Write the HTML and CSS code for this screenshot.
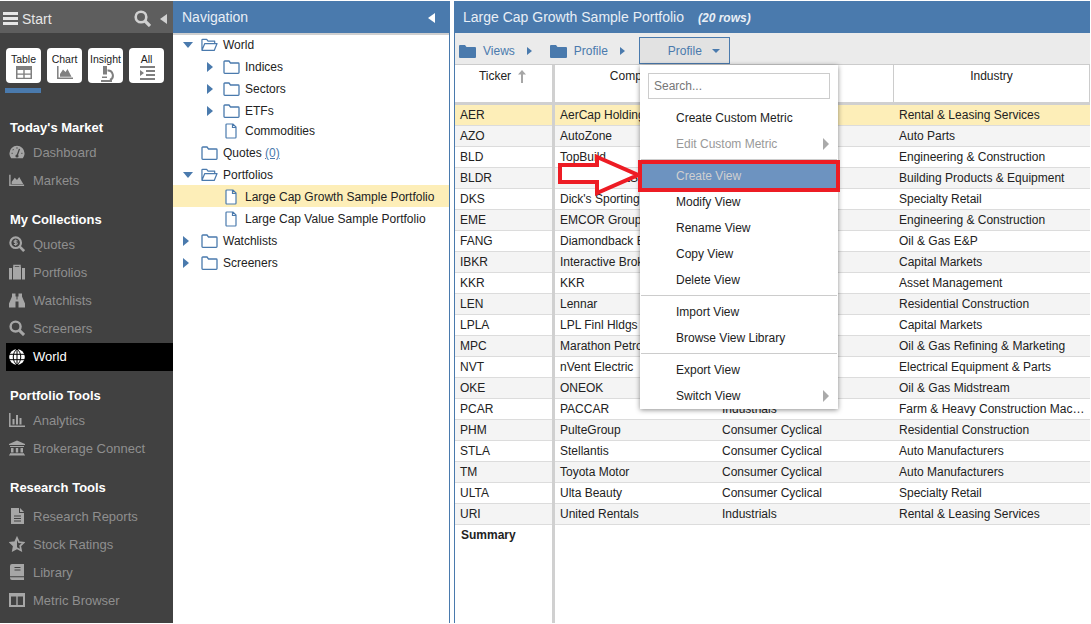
FILE: index.html
```html
<!DOCTYPE html>
<html lang="en">
<head>
    <meta charset="UTF-8" />
    <meta name="viewport" content="width=device-width, initial-scale=1" />
    <title>Large Cap Growth Sample Portfolio</title>
    <link rel="stylesheet" href="styles.css">
</head>
<body>

<svg class="defs" width="0" height="0">
    <symbol id="i-folder" viewBox="0 0 17 14"><path d="M1 2.500V12.500a.8.8 0 0 0 .8.8H15.200a.8.8 0 0 0 .8-.8V3.800a.8.8 0 0 0-.8-.8H7.500L6 1H1.800A.8.8 0 0 0 1 1.800Z" fill="#fff" stroke="#4a7aad" stroke-width="1.300"/></symbol>
    <symbol id="i-open" viewBox="0 0 18 14"><path d="M1 12.500V1.800A.8.8 0 0 1 1.800 1H6L7.500 3H14.500V5.500M1 12.500 4 5.500H17L14 12.800H1.500Z" fill="#fff" stroke="#4a7aad" stroke-width="1.300" stroke-linejoin="round"/></symbol>
    <symbol id="i-doc" viewBox="0 0 12 16"><path d="M1 1.800A.8.8 0 0 1 1.800 1H8L11 4V14.200A.8.8 0 0 1 10.200 15H1.800A.8.8 0 0 1 1 14.200ZM7.500 1V4.500H11" fill="#fff" stroke="#4a7aad" stroke-width="1.200"/></symbol>
    <symbol id="i-solid" viewBox="0 0 17 14"><path d="M0 2A1 1 0 0 1 1 1H6L7.500 3H16A1 1 0 0 1 17 4V13A1 1 0 0 1 16 14H1A1 1 0 0 1 0 13Z" fill="#4a7aad"/></symbol>
    <symbol id="i-dash" viewBox="0 0 18 16"><path d="M9 1A8.500 8.500 0 0 0 .5 9.500C.5 11.500 1.200 13.500 2.500 15H15.500C16.800 13.500 17.500 11.500 17.500 9.500A8.500 8.500 0 0 0 9 1Z" fill="#a6a6a6"/><path d="M9 12.500 11.800 4.500M4 9.500H3M5 5.800 4.300 5.100M9 4V3M14 9.500H15" stroke="#414141" stroke-width="1.500"/><circle cx="9" cy="12.500" r="1.800" fill="#414141"/></symbol>
    <symbol id="i-area" viewBox="0 0 18 14"><path d="M1 1V13H17" fill="none" stroke="#a6a6a6" stroke-width="1.600"/><path d="M3 11.500V9L6.500 4.500 9 7 11.500 3.500 16 11.500Z" fill="#a6a6a6"/></symbol>
    <symbol id="i-quote" viewBox="0 0 18 18"><circle cx="7.500" cy="7.500" r="6" fill="none" stroke="#a6a6a6" stroke-width="2.400"/><path d="M12 12 17 17" stroke="#a6a6a6" stroke-width="3"/><path d="M9.500 5.500H6.700A1 1 0 0 0 6.700 7.500H8.300A1 1 0 0 1 8.300 9.500H5.500M7.500 4V11" fill="none" stroke="#a6a6a6" stroke-width="1.200"/></symbol>
    <symbol id="i-case" viewBox="0 0 16 15"><path d="M5 3V1H11V3" fill="none" stroke="#a6a6a6" stroke-width="1.500"/><path d="M0 3.500H3V15H0ZM4 2.500H12V15H4ZM13 3.500H16V15H13Z" fill="#a6a6a6"/></symbol>
    <symbol id="i-binoc" viewBox="0 0 16 15"><path d="M3 1H6.500V4H7.500V7H8.500V4H9.500V1H13V4L16 11V15H9.500V9H6.500V15H0V11L3 4Z" fill="#a6a6a6"/></symbol>
    <symbol id="i-search" viewBox="0 0 17 17"><circle cx="7" cy="7" r="5.300" fill="none" stroke="currentColor" stroke-width="2.600"/><path d="M11 11 16 16" stroke="currentColor" stroke-width="3.200"/></symbol>
    <symbol id="i-globe" viewBox="0 0 16 16"><circle cx="8" cy="8" r="7.800" fill="#fff"/><path d="M0 5.300H16M0 10.700H16M8 0V16M8 0C3 4 3 12 8 16M8 0C13 4 13 12 8 16" fill="none" stroke="#000" stroke-width="1"/></symbol>
    <symbol id="i-bars" viewBox="0 0 16 14"><path d="M.8 0V13.200H16" fill="none" stroke="#a6a6a6" stroke-width="1.500"/><path d="M3.500 6H5.500V11.500H3.500ZM7 2H9V11.500H7ZM10.500 5H12.500V11.500H10.500Z" fill="#a6a6a6"/></symbol>
    <symbol id="i-bank" viewBox="0 0 16 15"><path d="M8 0 16 3.500V4.500H0V3.500ZM1 5.500H15V6.500H1ZM2 7.500H4.500V12H2ZM6.800 7.500H9.200V12H6.800ZM11.500 7.500H14V12H11.500ZM1 12.800H15V14H1ZM0 14H16V15H0Z" fill="#a6a6a6"/></symbol>
    <symbol id="i-report" viewBox="0 0 14 16"><path d="M1 0H9V5H14V16H1ZM10 0 14 4H10Z" fill="#a6a6a6"/><path d="M4 8H11M4 10.500H11M4 13H11" stroke="#414141" stroke-width="1"/></symbol>
    <symbol id="i-star" viewBox="0 0 17 16"><path d="M8.500 1.500 10.600 6 15.500 6.600 11.900 10 12.800 14.800 8.500 12.400 4.200 14.800 5.100 10 1.500 6.600 6.400 6Z" fill="none" stroke="#a6a6a6" stroke-width="1.800"/><path d="M8.500 2V12.400L4.200 14.800 5.100 10 1.500 6.600 6.400 6Z" fill="#a6a6a6"/></symbol>
    <symbol id="i-book" viewBox="0 0 15 16"><path d="M2.500 0H14.500V16H2.500A2 2 0 0 1 .5 14V2A2 2 0 0 1 2.500 0Z" fill="#a6a6a6"/><path d="M5 3.500H11M5 6H11M.5 12.800H14.500" stroke="#414141" stroke-width="1.100" fill="none"/></symbol>
    <symbol id="i-columns" viewBox="0 0 16 14"><path d="M0 0H16V14H0ZM2 3.500V12H7.300V3.500ZM8.700 3.500V12H14V3.500Z" fill="#a6a6a6" fill-rule="evenodd"/></symbol>
    <symbol id="i-table" viewBox="0 0 16 13"><path d="M0 0H16V13H0ZM1.500 4V7.500H7.300V4ZM8.700 4V7.500H14.500V4ZM1.500 8.800V11.700H7.300V8.800ZM8.700 8.800V11.700H14.500V8.800Z" fill="#7f7f7f" fill-rule="evenodd"/></symbol>
    <symbol id="i-chart" viewBox="0 0 16 13"><path d="M.8 0V12.200H16" fill="none" stroke="#7f7f7f" stroke-width="1.500"/><path d="M3 10.800V8L6 3.500 8.500 6 10.500 3 14.500 10.800Z" fill="#7f7f7f"/></symbol>
    <symbol id="i-micro" viewBox="0 0 16 16"><path d="M5 0H9V8.500H5ZM3 14H14V16H3Z" fill="#7f7f7f"/><path d="M9.500 4.500A5 5 0 0 1 12 14" fill="none" stroke="#7f7f7f" stroke-width="2"/><path d="M4 10.500H9V12H4Z" fill="#7f7f7f"/></symbol>
    <symbol id="i-list" viewBox="0 0 16 14"><path d="M1 0H16V2H1ZM7 4H16V6H7ZM7 8H16V10H7ZM1 12H16V14H1ZM1 4 5 7 1 10Z" fill="#7f7f7f"/></symbol>
</svg>

<div class="app">

    <aside class="sidebar">
        <div class="side-top">
            <span class="burger"><i></i><i></i><i></i></span>
            <span class="side-title">Start</span>
            <svg class="side-search"><use href="#i-search"/></svg>
            <span class="tri-left side-collapse"></span>
        </div>
        <div class="modes">
            <div class="mode"><span>Table</span><svg width="16" height="13"><use href="#i-table"/></svg></div>
            <div class="mode"><span>Chart</span><svg width="16" height="13"><use href="#i-chart"/></svg></div>
            <div class="mode"><span>Insight</span><svg width="16" height="16"><use href="#i-micro"/></svg></div>
            <div class="mode"><span>All</span><svg width="16" height="14"><use href="#i-list"/></svg></div>
        </div>
        <div class="mode-bar"></div>

        <h4 class="side-head first">Today's Market</h4>
        <a class="side-item"><svg><use href="#i-dash"/></svg>Dashboard</a>
        <a class="side-item"><svg><use href="#i-area"/></svg>Markets</a>

        <h4 class="side-head">My Collections</h4>
        <a class="side-item"><svg><use href="#i-quote"/></svg>Quotes</a>
        <a class="side-item"><svg><use href="#i-case"/></svg>Portfolios</a>
        <a class="side-item"><svg><use href="#i-binoc"/></svg>Watchlists</a>
        <a class="side-item"><svg><use href="#i-search"/></svg>Screeners</a>
        <a class="side-item active"><svg><use href="#i-globe"/></svg>World</a>

        <h4 class="side-head">Portfolio Tools</h4>
        <a class="side-item"><svg><use href="#i-bars"/></svg>Analytics</a>
        <a class="side-item"><svg><use href="#i-bank"/></svg>Brokerage Connect</a>

        <h4 class="side-head last">Research Tools</h4>
        <a class="side-item"><svg><use href="#i-report"/></svg>Research Reports</a>
        <a class="side-item"><svg><use href="#i-star"/></svg>Stock Ratings</a>
        <a class="side-item"><svg><use href="#i-book"/></svg>Library</a>
        <a class="side-item"><svg><use href="#i-columns"/></svg>Metric Browser</a>
    </aside>

    <nav class="navpanel">
        <div class="panel-head">Navigation<span class="tri-left nav-collapse"></span></div>
        <div class="tree">
            <div class="node"><span class="tri-down"></span><svg class="ic-folder"><use href="#i-open"/></svg>World</div>
            <div class="node sub"><span class="tri-right"></span><svg class="ic-folder"><use href="#i-folder"/></svg>Indices</div>
            <div class="node sub"><span class="tri-right"></span><svg class="ic-folder"><use href="#i-folder"/></svg>Sectors</div>
            <div class="node sub"><span class="tri-right"></span><svg class="ic-folder"><use href="#i-folder"/></svg>ETFs</div>
            <div class="node sub short"><span class="no-tri"></span><svg class="ic-doc"><use href="#i-doc"/></svg>Commodities</div>
            <div class="node"><span class="no-tri"></span><svg class="ic-folder"><use href="#i-folder"/></svg>Quotes&nbsp;<a class="count">(0)</a></div>
            <div class="node"><span class="tri-down"></span><svg class="ic-folder"><use href="#i-open"/></svg>Portfolios</div>
            <div class="node sub selected"><span class="no-tri"></span><svg class="ic-doc"><use href="#i-doc"/></svg>Large Cap Growth Sample Portfolio</div>
            <div class="node sub"><span class="no-tri"></span><svg class="ic-doc"><use href="#i-doc"/></svg>Large Cap Value Sample Portfolio</div>
            <div class="node"><span class="tri-right"></span><svg class="ic-folder"><use href="#i-folder"/></svg>Watchlists</div>
            <div class="node"><span class="tri-right"></span><svg class="ic-folder"><use href="#i-folder"/></svg>Screeners</div>
        </div>
    </nav>

    <main class="content">
        <div class="panel-head">Large Cap Growth Sample Portfolio<em>(20 rows)</em></div>
        <div class="toolbar">
            <svg class="crumb-folder"><use href="#i-solid"/></svg><span class="crumb">Views</span><span class="tri-right small"></span>
            <svg class="crumb-folder"><use href="#i-solid"/></svg><span class="crumb">Profile</span><span class="tri-right small"></span>
            <div class="view-btn">Profile<span class="tri-down small"></span></div>
        </div>

        <div class="grid-area">
            <div class="frozen">
                <div class="th">Ticker<svg class="sort" width="8" height="13" viewBox="0 0 8 13"><path d="M4 0 8 4.500H5V13H3V4.500H0Z" fill="#a6a6a6"/></svg></div>
                <div class="sep"></div>
                <div class="row hl">AER</div>
                <div class="row">AZO</div>
                <div class="row">BLD</div>
                <div class="row">BLDR</div>
                <div class="row">DKS</div>
                <div class="row">EME</div>
                <div class="row">FANG</div>
                <div class="row">IBKR</div>
                <div class="row">KKR</div>
                <div class="row">LEN</div>
                <div class="row">LPLA</div>
                <div class="row">MPC</div>
                <div class="row">NVT</div>
                <div class="row">OKE</div>
                <div class="row">PCAR</div>
                <div class="row">PHM</div>
                <div class="row">STLA</div>
                <div class="row">TM</div>
                <div class="row">ULTA</div>
                <div class="row">URI</div>
                <div class="summary">Summary</div>
            </div>
            <div class="scroll">
                <div class="th-row"><div class="th">Company</div><div class="th">Sector</div><div class="th">Industry</div></div>
                <div class="sep"></div>
                <div class="row hl"><span>AerCap Holdings</span><span>Industrials</span><span>Rental &amp; Leasing Services</span></div>
                <div class="row"><span>AutoZone</span><span>Consumer Cyclical</span><span>Auto Parts</span></div>
                <div class="row"><span>TopBuild</span><span>Consumer Cyclical</span><span>Engineering &amp; Construction</span></div>
                <div class="row"><span>Builders FirstSource</span><span>Industrials</span><span>Building Products &amp; Equipment</span></div>
                <div class="row"><span>Dick's Sporting Goods</span><span>Consumer Cyclical</span><span>Specialty Retail</span></div>
                <div class="row"><span>EMCOR Group</span><span>Industrials</span><span>Engineering &amp; Construction</span></div>
                <div class="row"><span>Diamondback Energy</span><span>Energy</span><span>Oil &amp; Gas E&amp;P</span></div>
                <div class="row"><span>Interactive Brokers</span><span>Financial Services</span><span>Capital Markets</span></div>
                <div class="row"><span>KKR</span><span>Financial Services</span><span>Asset Management</span></div>
                <div class="row"><span>Lennar</span><span>Consumer Cyclical</span><span>Residential Construction</span></div>
                <div class="row"><span>LPL Finl Hldgs</span><span>Financial Services</span><span>Capital Markets</span></div>
                <div class="row"><span>Marathon Petroleum</span><span>Energy</span><span>Oil &amp; Gas Refining &amp; Marketing</span></div>
                <div class="row"><span>nVent Electric</span><span>Industrials</span><span>Electrical Equipment &amp; Parts</span></div>
                <div class="row"><span>ONEOK</span><span>Energy</span><span>Oil &amp; Gas Midstream</span></div>
                <div class="row"><span>PACCAR</span><span>Industrials</span><span>Farm &amp; Heavy Construction Machinery</span></div>
                <div class="row"><span>PulteGroup</span><span>Consumer Cyclical</span><span>Residential Construction</span></div>
                <div class="row"><span>Stellantis</span><span>Consumer Cyclical</span><span>Auto Manufacturers</span></div>
                <div class="row"><span>Toyota Motor</span><span>Consumer Cyclical</span><span>Auto Manufacturers</span></div>
                <div class="row"><span>Ulta Beauty</span><span>Consumer Cyclical</span><span>Specialty Retail</span></div>
                <div class="row"><span>United Rentals</span><span>Industrials</span><span>Rental &amp; Leasing Services</span></div>
            </div>
        </div>

        <div class="menu">
            <div class="menu-search">Search...</div>
            <div class="menu-item">Create Custom Metric</div>
            <div class="menu-item disabled">Edit Custom Metric<span class="tri-right grey"></span></div>
            <hr>
            <div class="menu-item current">Create View</div>
            <div class="menu-item">Modify View</div>
            <div class="menu-item">Rename View</div>
            <div class="menu-item">Copy View</div>
            <div class="menu-item">Delete View</div>
            <hr>
            <div class="menu-item">Import View</div>
            <div class="menu-item">Browse View Library</div>
            <hr>
            <div class="menu-item">Export View</div>
            <div class="menu-item">Switch View<span class="tri-right grey"></span></div>
        </div>

        <!-- red markup drawn over the shot -->
        <div class="callout-box"></div>
        <svg class="callout-arrow" width="84" height="42" viewBox="0 0 84 42"><path d="M2 11H39V3L80 21 39 39V28H2Z" fill="#fff" stroke="#ed1c24" stroke-width="4"/></svg>
    </main>

</div>

</body>
</html>
```

FILE: styles.css
```css
* { box-sizing: border-box; }
html, body { margin: 0; height: 100%; overflow: hidden; }
body { font-family: "Liberation Sans", Arial, sans-serif; font-size: 12px; color: #222; background: #fff; padding: 1px 1px 1px 0; }
.defs { position: absolute; }
.app { display: flex; height: 100%; }

/* triangles */
.tri-left, .tri-right, .tri-down { display: inline-block; width: 0; height: 0; border-style: solid; border-color: transparent; }
.tri-left { border-width: 5px 7px 5px 0; border-right-color: #fff; }
.tri-right { border-width: 5px 0 5px 6px; border-left-color: #4a7aad; }
.tri-down { border-width: 6px 5px 0 5px; border-top-color: #4a7aad; }
.tri-right.small { border-width: 4px 0 4px 5px; }
.tri-down.small { border-width: 4px 4px 0 4px; margin-left: 10px; }
.tri-right.grey { border-width: 6px 0 6px 6px; border-left-color: #aaa; margin-left: auto; }

/* left sidebar */
.sidebar { width: 173px; flex: none; background: #414141; color: #a6a6a6; }
.side-top { height: 32px; background: #5e5e5e; display: flex; align-items: center; padding: 3px 6px 0 3px; color: #e6e6e6; }
.burger { width: 15px; display: flex; flex-direction: column; gap: 2px; margin-right: 4px; }
.burger i { display: block; height: 3px; background: #e6e6e6; }
.side-title { font-size: 14px; }
.side-search { width: 17px; height: 17px; margin-left: auto; color: #d0d0d0; }
.side-collapse { margin-left: 9px; border-right-color: #d0d0d0; }
.modes { display: flex; gap: 6px; padding: 15px 0 0 6px; }
.mode { width: 35px; height: 35px; background: #fff; border-radius: 4px; display: flex; flex-direction: column; align-items: center; font-size: 10.500px; color: #222; padding-top: 5px; line-height: 12px; gap: 1px; }
.mode-bar { width: 36px; height: 5px; margin: 5px 0 0 5px; background: #4a7aad; }
.side-head { margin: 14px 0 0; padding-left: 10px; height: 22px; line-height: 24px; font-size: 13px; font-weight: bold; color: #fff; }
.side-head.first { margin-top: 23px; }
.side-head.last { margin-bottom: 4px; }
.side-item { display: flex; align-items: center; height: 28px; padding-left: 9px; font-size: 13px; color: #8f8f8f; }
.side-item svg { width: 16px; height: 16px; margin-right: 8px; flex: none; color: #a6a6a6; }
.side-item.active { background: #000; color: #fff; margin: 1px 0 -1px 6px; padding: 0 0 1px 3px; }

/* navigation panel */
.navpanel { width: 277px; flex: none; border-right: 1px solid #4a7aad; }
.panel-head { height: 32px; background: #4a7aad; color: #e8eef5; font-size: 14px; line-height: 33px; padding-left: 9px; position: relative; }
.navpanel .panel-head { box-shadow: 0 2px 0 #cfcfcf; }
.nav-collapse { position: absolute; right: 14px; top: 12px; }
.node { height: 22px; display: flex; align-items: center; padding: 2px 0 0 10px; color: #222; }
.node.sub { padding-left: 34px; }
.node.short { height: 20px; padding-top: 0; }
.node.selected { background: #fdeeb8; }
.node .tri-down, .node .tri-right, .no-tri { flex: none; }
.node .tri-down { margin-right: 8px; }
.node .tri-right { margin-right: 12px; }
.no-tri { width: 18px; }
.node.sub .tri-right { margin-right: 10px; }
.node.sub .no-tri { width: 16px; }
.ic-folder { width: 17px; height: 14px; margin-right: 5px; flex: none; }
.ic-doc { width: 12px; height: 16px; margin: 0 8px 0 2px; flex: none; }
.count { color: #4a7aad; text-decoration: underline; }

/* main panel */
.content { flex: 1; min-width: 0; margin-left: 4px; border-left: 1px solid #4a7aad; position: relative; display: flex; flex-direction: column; }
.content .panel-head { margin-left: -1px; }
.content .panel-head em { margin-left: 14px; font-size: 12px; font-weight: bold; }
.toolbar { height: 32px; background: #ebebeb; border-bottom: 1px solid #ccc; display: flex; align-items: center; padding: 4px 0 0 4px; color: #4a7aad; font-size: 12px; flex: none; }
.crumb-folder { width: 17px; height: 14px; margin-right: 7px; }
.crumb { margin-right: 12px; }
.toolbar .tri-right.small { margin-right: 18px; }
.view-btn { width: 91px; height: 27px; margin-left: -4px; align-self: flex-end; background: #e2e2e2; border: 1px solid #4a7aad; display: flex; align-items: center; justify-content: flex-end; padding-right: 9px; }

.grid-area { flex: 1; display: flex; min-height: 0; }
.frozen { width: 100px; flex: none; border-right: 3px solid #d0d0d0; }
.scroll { flex: 1; min-width: 0; }
.th { height: 37px; padding-top: 4px; text-align: center; }
.frozen .th { padding-right: 2px; }
.th-row { display: grid; grid-template-columns: 162px 177px 1fr; }
.th-row .th { border-right: 1px solid #ccc; }
.sort { margin-left: 7px; vertical-align: top; margin-top: 1px; }
.sep { height: 3px; background: #d0d0d0; }
.row { height: 21px; line-height: 20px; padding-left: 5px; border-bottom: 1px solid #dcdcdc; white-space: nowrap; overflow: hidden; }
.row:nth-child(even) { background: #f4f4f4; }
.row.hl { background: #fdeeb8; }
.scroll .row { display: grid; grid-template-columns: 162px 177px 1fr; padding-left: 0; }
.scroll .row span { padding: 0 4px 0 5px; overflow: hidden; text-overflow: ellipsis; }
.summary { font-weight: bold; padding: 3px 6px; }

/* dropdown */
.menu { position: absolute; left: 185px; top: 64px; width: 198px; height: 344px; background: #fff; box-shadow: 0 1px 5px rgba(0,0,0,.45); padding: 8px 0 0; }
.menu-search { margin: 0 8px 6px; height: 26px; border: 1px solid #ccc; color: #777; line-height: 24px; padding-left: 5px; }
.menu-item { height: 26px; line-height: 26px; padding: 0 9px 0 36px; display: flex; align-items: center; color: #222; }
.menu-item.disabled { color: #999; }
.menu-item.current { background: #6d93c0; color: #d0d0d0; }
.menu hr { margin: 2px 1px 3px; border: 0; border-top: 1px solid #ccc; }

.callout-box { position: absolute; left: 183px; top: 159px; width: 202px; height: 32px; border: 4px solid #ed1c24; }
.callout-arrow { position: absolute; left: 103px; top: 153px; }
```
